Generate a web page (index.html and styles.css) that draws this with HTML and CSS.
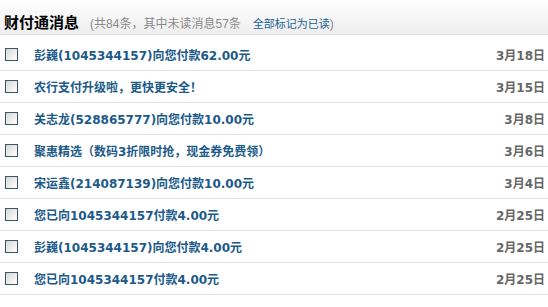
FILE: index.html
```html
<!DOCTYPE html>
<html lang="zh-CN">
<head>
    <meta charset="UTF-8">
    <title>财付通消息</title>
    <link rel="stylesheet" href="styles.css">
</head>
<body>
    <div class="msg-box">
        <div class="msg-head">
            <span class="msg-title">财付通消息</span>
            <span class="msg-count">(共84条，其中未读消息57条<a class="mark-read" href="#">全部标记为已读</a>)</span>
        </div>

        <ul class="msg-list">
            <li class="msg-row">
                <span class="check"></span>
                <a class="msg-text" href="#">彭巍(1045344157)向您付款62.00元</a>
                <span class="msg-date">3月18日</span>
            </li>
            <li class="msg-row">
                <span class="check"></span>
                <a class="msg-text" href="#">农行支付升级啦，更快更安全！</a>
                <span class="msg-date">3月15日</span>
            </li>
            <li class="msg-row">
                <span class="check"></span>
                <a class="msg-text" href="#">关志龙(528865777)向您付款10.00元</a>
                <span class="msg-date">3月8日</span>
            </li>
            <li class="msg-row">
                <span class="check"></span>
                <a class="msg-text" href="#">聚惠精选（数码3折限时抢，现金券免费领）</a>
                <span class="msg-date">3月6日</span>
            </li>
            <li class="msg-row">
                <span class="check"></span>
                <a class="msg-text" href="#">宋运鑫(214087139)向您付款10.00元</a>
                <span class="msg-date">3月4日</span>
            </li>
            <li class="msg-row">
                <span class="check"></span>
                <a class="msg-text" href="#">您已向1045344157付款4.00元</a>
                <span class="msg-date">2月25日</span>
            </li>
            <li class="msg-row">
                <span class="check"></span>
                <a class="msg-text" href="#">彭巍(1045344157)向您付款4.00元</a>
                <span class="msg-date">2月25日</span>
            </li>
            <li class="msg-row">
                <span class="check"></span>
                <a class="msg-text" href="#">您已向1045344157付款4.00元</a>
                <span class="msg-date">2月25日</span>
            </li>
        </ul>
    </div>
</body>
</html>
```

FILE: styles.css
```css
body {
    margin: 0;
    background-color: #fff;
    font-family: "DejaVu Sans", "Noto Sans CJK SC", sans-serif;
}

a {
    text-decoration: none;
}

.msg-head {
    height: 35px;
    box-sizing: border-box;
    padding: 13px 0 0 4px;
    line-height: 18px;
    background: linear-gradient(#ffffff, #eeeeee);
    border-bottom: 1px solid #dddddd;
    white-space: nowrap;
}

.msg-title {
    font-family: "Noto Sans CJK SC", sans-serif;
    font-size: 15px;
    font-weight: bold;
    color: #000;
}

.msg-count {
    margin-left: 6px;
    font-family: "Liberation Sans", "Noto Sans CJK SC", sans-serif;
    font-size: 12px;
    color: #8a8a8a;
}

.mark-read {
    margin-left: 12px;
    font-size: 11px;
    color: #1a6394;
}

.msg-list {
    list-style: none;
    margin: 4px 0 0;
    padding: 0;
}

.msg-row {
    display: flex;
    align-items: center;
    height: 31px;
    border-bottom: 1px solid #e2e2e2;
    padding: 0 3px 0 5px;
    font-size: 12px;
    font-weight: bold;
}

.check {
    width: 11px;
    height: 11px;
    border: 1px solid #3a5468;
    background: linear-gradient(135deg, #d6d6d6, #ffffff);
}

.msg-text {
    margin-left: 16px;
    color: #1c5a88;
}

.msg-date {
    margin-left: auto;
    color: #666;
}
```
